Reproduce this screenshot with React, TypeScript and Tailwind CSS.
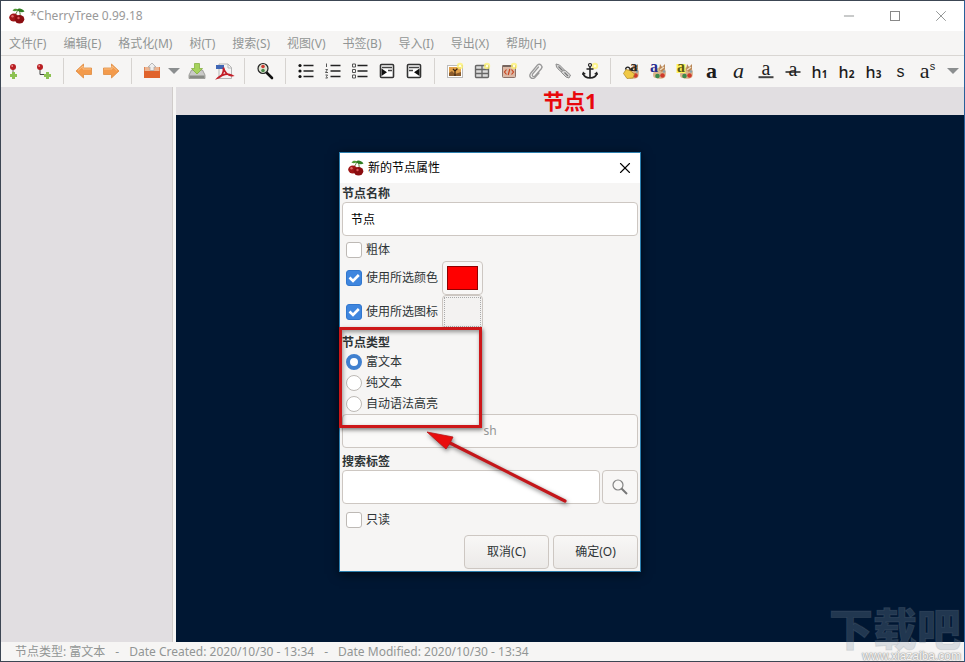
import { Minus, X } from 'lucide-react';
import { useState, type ReactNode } from 'react';

const MENUS = [
  '文件(F)',
  '编辑(E)',
  '格式化(M)',
  '树(T)',
  '搜索(S)',
  '视图(V)',
  '书签(B)',
  '导入(I)',
  '导出(X)',
  '帮助(H)',
];

const NODE_TYPES = ['富文本', '纯文本', '自动语法高亮'];

interface Tool {
  label: string;
  icon: ReactNode;
}

function Cherries() {
  return (
    <svg viewBox="0 0 16 16" className="size-4 shrink-0">
      <path d="M5 8C7 6 8 4 9 1.500M11 9C11.500 6 11 3 9 1.500" fill="none" stroke="#5b7d3a" strokeWidth="1" />
      <path d="M8 2C9 0 12.500 -.3 15.500 3.500C13 5 10 4 8 2Z" fill="#2f7d22" />
      <path d="M9 2C7.500 0 5 .3 3.500 2.500C5.500 3.800 8 3 9 2Z" fill="#4f9a35" />
      <ellipse cx="4.800" cy="9.500" rx="4.600" ry="4" fill="#a01616" />
      <ellipse cx="10.500" cy="11.300" rx="4.800" ry="4.200" fill="#8a0d10" />
      <circle cx="3.500" cy="8.300" r="1.200" fill="#e0696a" />
      <circle cx="9.500" cy="10" r="1.200" fill="#dc5558" />
    </svg>
  );
}

function Icon({ children }: { children: ReactNode }) {
  return (
    <svg viewBox="0 0 20 20" className="size-5 overflow-visible" fill="none">
      {children}
    </svg>
  );
}

function Spark({ x = 15, y = 5 }: { x?: number; y?: number }) {
  return (
    <>
      <circle cx={x} cy={y} r="3.200" fill="#fff36b" opacity=".75" />
      <circle cx={x} cy={y} r="1.300" fill="#fffde0" />
    </>
  );
}

function Palette() {
  return (
    <>
      <path d="M5 14C5 9 10 6 14 6C18 7 18.500 12 17.500 15C17 18 10 18.500 8 17C6 17 5 16 5 14Z" fill="#d9b48a" />
      <path d="M11 9L12 3L14 6L17 3L17 8L14 11Z" fill="#b98656" />
      <path d="M12 9L16 6" stroke="#f0dcc0" strokeWidth="1.500" />
      <circle cx="9.500" cy="15" r="2.300" fill="#3c8a4c" />
      <circle cx="14.500" cy="14.500" r="2.300" fill="#cf3a2c" />
      <circle cx="16" cy="10.500" r="1.300" fill="#8aa0a8" />
    </>
  );
}

// Glyph used by the text-format tools
function Letter({ className, children }: { className: string; children: ReactNode }) {
  return <span className={`leading-5 text-[#1c1c1c] ${className}`}>{children}</span>;
}

function Heading({ level }: { level: number }) {
  return (
    <Letter className="flex items-baseline pt-[2px] font-['Noto_Sans'] text-base font-medium">
      h<span className="text-[10px] font-bold leading-3">{level}</span>
    </Letter>
  );
}

const treeTools: Tool[] = [
  {
    label: '添加节点',
    icon: (
      <Icon>
        <path d="M7 6V14" stroke="#666" />
        <circle cx="7" cy="6" r="3" fill="#b81e22" />
        <circle cx="6.200" cy="5" r=".9" fill="#ee8f90" />
        <path d="M7.500 11V18M4 14.500H11" stroke="#8cc152" strokeWidth="3" />
      </Icon>
    ),
  },
  {
    label: '添加子节点',
    icon: (
      <Icon>
        <path d="M7 6V13.500H13" stroke="#444" />
        <circle cx="7" cy="6" r="3" fill="#b81e22" />
        <circle cx="6.200" cy="5" r=".9" fill="#ee8f90" />
        <path d="M14.500 11V18M11 14.500H18" stroke="#8cc152" strokeWidth="3" />
      </Icon>
    ),
  },
];

const historyTools: Tool[] = [
  {
    label: '后退',
    icon: (
      <Icon>
        <path d="M2 10L9.500 3V7H17.500V13.500H9.500V17Z" fill="#f39a4b" stroke="#e08a3e" strokeWidth=".8" strokeLinejoin="round" />
        <path d="M4 9.500L9 5V8H17" stroke="#f9bf86" />
      </Icon>
    ),
  },
  {
    label: '前进',
    icon: (
      <Icon>
        <path d="M18 10L10.500 3V7H2.500V13.500H10.500V17Z" fill="#f39a4b" stroke="#e08a3e" strokeWidth=".8" strokeLinejoin="round" />
        <path d="M16 9.500L11 5V8H3" stroke="#f9bf86" />
      </Icon>
    ),
  },
];

const openTool: Tool = {
  label: '打开',
  icon: (
    <Icon>
      <path d="M2 6H18V17H2Z" fill="#c9571f" />
      <path d="M2 10H18V17H2Z" fill="#e0632c" />
      <path d="M2.500 6H17.500V10H2.500Z" fill="#eeb48f" />
      <path d="M10 2L14 6H12V9.500H8V6H6Z" fill="#eee" stroke="#aaa" strokeWidth=".8" />
    </Icon>
  ),
};

const saveTools: Tool[] = [
  {
    label: '保存',
    icon: (
      <Icon>
        <path d="M4.500 9H15.500L18 14V17.500H2V14Z" fill="#c9c9c7" stroke="#8f8f8c" strokeWidth=".8" />
        <path d="M2.500 14.500H17.500V17H2.500Z" fill="#888a85" />
        <path d="M7.500 2.500H12.500V7.500H15.500L10 13L4.500 7.500H7.500Z" fill="#a6d35c" stroke="#7cab35" strokeWidth=".7" />
      </Icon>
    ),
  },
  {
    label: '导出 PDF',
    icon: (
      <Icon>
        <path d="M5 3H14L17.500 6.500V17.500H5Z" fill="#f4f4f4" stroke="#b5b5b5" />
        <path d="M14 3V7H17.500" stroke="#b5b5b5" />
        <path d="M2 4H10V8H2Z" fill="#3f66b5" />
        <path d="M4 17C8 16 10 11 9.500 6.500C10 11 14 15 18 14.500C14 12 8 13 4 17Z" stroke="#c3202a" strokeWidth="1.800" />
      </Icon>
    ),
  },
];

const findTool: Tool = {
  label: '查找',
  icon: (
    <Icon>
      <path d="M12 12L17 17" stroke="#111" strokeWidth="2.600" strokeLinecap="round" />
      <circle cx="8" cy="7.500" r="5" fill="#dfe4d5" stroke="#222" strokeWidth="1.200" />
      <circle cx="8" cy="5.500" r="1.800" fill="#cf3b32" />
      <circle cx="8" cy="9.500" r="1.800" fill="#4a8a4a" />
    </Icon>
  ),
};

const listTools: Tool[] = [
  {
    label: '项目列表',
    icon: (
      <Icon>
        <path d="M7.500 4.500H17.500M7.500 10H17.500M7.500 15.500H17.500" stroke="#222" strokeWidth="1.600" />
        <circle cx="4" cy="4.500" r="1.600" fill="#111" />
        <circle cx="4" cy="10" r="1.600" fill="#111" />
        <circle cx="4" cy="15.500" r="1.600" fill="#111" />
      </Icon>
    ),
  },
  {
    label: '编号列表',
    icon: (
      <Icon>
        <path d="M7.500 4.500H17.500M7.500 10H17.500M7.500 15.500H17.500" stroke="#222" strokeWidth="1.300" />
        <path d="M3.500 2.500V6M2.500 8.500H4.500L2.500 11.500H5M2.500 14H4.500L3.500 15.500L4.500 17H2.500" stroke="#444" strokeWidth=".9" />
      </Icon>
    ),
  },
  {
    label: '待办列表',
    icon: (
      <Icon>
        <path d="M7.500 4.500H17.500M7.500 10H17.500M7.500 15.500H17.500" stroke="#222" strokeWidth="1.500" />
        <path d="M2.500 3H5.500V6H2.500ZM2.500 8.500H5.500V11.500H2.500ZM2.500 14H5.500V17H2.500Z" stroke="#555" />
      </Icon>
    ),
  },
  {
    label: '增加缩进',
    icon: (
      <Icon>
        <rect x="3.500" y="3.500" width="13" height="13" rx="1" fill="#fff" stroke="#333" strokeWidth="1.600" />
        <path d="M5 6.500H15M11 9.500H15" stroke="#444" strokeWidth="1.300" />
        <path d="M4.500 7.500V15L10 11.200Z" fill="#111" />
      </Icon>
    ),
  },
  {
    label: '减少缩进',
    icon: (
      <Icon>
        <rect x="3.500" y="3.500" width="13" height="13" rx="1" fill="#fff" stroke="#333" strokeWidth="1.600" />
        <path d="M5 6.500H15M5 9.500H9" stroke="#444" strokeWidth="1.300" />
        <path d="M15.500 7.500V15L10 11.200Z" fill="#111" />
      </Icon>
    ),
  },
];

const insertTools: Tool[] = [
  {
    label: '插入图片',
    icon: (
      <Icon>
        <rect x="2.500" y="4.500" width="15" height="12" fill="#fff" stroke="#bbb" />
        <path d="M4 6H16V15H4Z" fill="#e0a04c" />
        <path d="M4 12L7 10L10 13L16 11V15H4Z" fill="#8a5b2c" />
        <path d="M10 15V9M8 8L10 10L12.500 7.500" stroke="#38240f" strokeWidth="1.200" />
        <Spark />
      </Icon>
    ),
  },
  {
    label: '插入表格',
    icon: (
      <Icon>
        <rect x="3.500" y="4.500" width="13" height="12" rx="1" fill="#dcdcdc" stroke="#666" strokeWidth="1.400" />
        <path d="M3.500 8.500H16.500M3.500 12.500H16.500M10 4.500V16.500" stroke="#666" strokeWidth="1.300" />
        <Spark />
      </Icon>
    ),
  },
  {
    label: '插入代码框',
    icon: (
      <Icon>
        <rect x="3.500" y="4.500" width="13" height="12" rx="1" fill="#dcb9a6" stroke="#8b7168" />
        <path d="M3.500 5H16.500" stroke="#76655e" strokeWidth="2" />
        <path d="M7.500 8.500L5.500 11L7.500 13.500M12.500 8.500L14.500 11L12.500 13.500M10.800 8L9.200 14" stroke="#c9451f" strokeWidth="1.200" />
        <Spark />
      </Icon>
    ),
  },
  {
    label: '插入附件',
    icon: (
      <Icon>
        <path d="M12.500 6L6.500 13C5.500 15 7.500 16.500 9 15L15.500 7.500C17 5 14 2 11.500 4L4.500 12.500C2.500 15.500 5.500 18.500 8.500 17L13 12" stroke="#999" strokeWidth="1.300" strokeLinecap="round" />
      </Icon>
    ),
  },
  {
    label: '插入链接',
    icon: (
      <Icon>
        <path d="M3 3L6.500 4L11 8.500L9.500 11.500L6.500 9.500L3.500 6Z" fill="#d4d4d4" stroke="#8b8b8b" strokeLinejoin="round" />
        <path d="M9.500 9L12.500 9.500L17.500 14L16 17L13 16L8.500 11.500Z" fill="#d4d4d4" stroke="#8b8b8b" strokeLinejoin="round" />
        <path d="M5.500 5.500L9 9M11.500 11.500L15 15" stroke="#777" strokeWidth="1.200" />
      </Icon>
    ),
  },
  {
    label: '插入锚点',
    icon: (
      <Icon>
        <Spark x={15} y={5} />
        <circle cx="10" cy="4" r="1.500" stroke="#222" strokeWidth="1.200" />
        <path d="M10 5.500V17M6.500 8H13.500M3 12C4 16 7 17 10 17C13 17 16 16 17 12" stroke="#222" strokeWidth="1.600" />
        <path d="M2 14L3 10.500L6 13ZM18 14L17 10.500L14 13Z" fill="#222" />
      </Icon>
    ),
  },
];

const formatTools: Tool[] = [
  {
    label: '最近格式',
    icon: (
      <Icon>
        <Palette />
        <text x="9" y="10" fontSize="15" fontWeight="700" fontFamily="Liberation Serif, serif" fill="#222">a</text>
        <path d="M2.500 12.500L5 8.500L9 9.500L13.500 13L12 17L6 17.500Z" fill="#f0c846" stroke="#a98422" strokeWidth=".7" />
        <path d="M4.500 8.500C5 5.500 8.500 5 9.500 9.500" stroke="#222" strokeWidth="1.300" />
      </Icon>
    ),
  },
  {
    label: '前景颜色',
    icon: (
      <Icon>
        <Palette />
        <text x="2" y="11" fontSize="16" fontWeight="700" fontFamily="Liberation Serif, serif" fill="#262b91">a</text>
      </Icon>
    ),
  },
  {
    label: '背景颜色',
    icon: (
      <Icon>
        <Palette />
        <path d="M1.500 3H10.500V12H1.500Z" fill="#fff35a" />
        <text x="2" y="11" fontSize="16" fontWeight="700" fontFamily="Liberation Serif, serif" fill="#5b5a18">a</text>
      </Icon>
    ),
  },
  { label: '粗体', icon: <Letter className="font-['Liberation_Serif'] text-[22px] font-bold">a</Letter> },
  { label: '斜体', icon: <Letter className="font-['Liberation_Serif'] text-[22px] italic">a</Letter> },
  {
    label: '下划线',
    icon: (
      <Icon>
        <text x="5.500" y="13.500" fontSize="20" fontFamily="Liberation Serif, serif" fill="#1c1c1c">a</text>
        <path d="M2.500 16.200H17.500" stroke="#444" strokeWidth="2" />
      </Icon>
    ),
  },
  {
    label: '删除线',
    icon: (
      <Icon>
        <text x="5.500" y="15" fontSize="20" fontFamily="Liberation Serif, serif" fill="#1c1c1c">a</text>
        <path d="M2.500 11H17.500" stroke="#222" strokeWidth="1.500" />
      </Icon>
    ),
  },
  { label: '标题 1', icon: <Heading level={1} /> },
  { label: '标题 2', icon: <Heading level={2} /> },
  { label: '标题 3', icon: <Heading level={3} /> },
  { label: '小号', icon: <Letter className="pt-[2px] font-['Liberation_Sans'] text-base">s</Letter> },
  {
    label: '上标',
    icon: (
      <Letter className="flex font-['Liberation_Serif'] text-[22px]">
        a<span className="font-['Liberation_Sans'] text-[11px] leading-[10px]">s</span>
      </Letter>
    ),
  },
];

function ToolButton({ label, icon }: Tool) {
  return (
    <button type="button" aria-label={label} className="flex h-[30px] w-[27px] shrink-0 items-center justify-center">
      {icon}
    </button>
  );
}

function ToolGroup({ tools }: { tools: Tool[] }) {
  return (
    <div className="flex">
      {tools.map((t) => (
        <ToolButton key={t.label} {...t} />
      ))}
    </div>
  );
}

function Separator() {
  return <div className="mx-[6px] h-[26px] w-[2px] shrink-0 border-r border-[#d6d3d0]" />;
}

function DropArrow({ label }: { label: string }) {
  return (
    <button type="button" aria-label={label} className="flex w-[18px] shrink-0 items-center justify-center">
      <svg viewBox="0 0 12 6" className="h-[6px] w-3">
        <path d="M0 0H12L6 6Z" fill="#8b8e8f" />
      </svg>
    </button>
  );
}

function Check({ label, defaultChecked = false }: { label: string; defaultChecked?: boolean }) {
  return (
    <label className="flex items-center gap-1">
      <span className="relative flex">
        <input
          type="checkbox"
          defaultChecked={defaultChecked}
          className="peer size-4 appearance-none rounded-[3px] border border-[#bdb9b5] bg-white checked:border-[#3177ce] checked:bg-[#3f86de]"
        />
        <svg viewBox="0 0 16 16" className="pointer-events-none absolute inset-0 hidden size-4 peer-checked:block">
          <path d="M3.500 7.500L7 11L12.800 5" fill="none" stroke="#fff" strokeWidth="2.600" />
        </svg>
      </span>
      {label}
    </label>
  );
}

function NodeDialog() {
  const [type, setType] = useState(NODE_TYPES[0]);
  const button = 'h-[34px] rounded-[4px] border border-[#cdc7c2]';

  return (
    <section
      role="dialog"
      aria-labelledby="dialog-title"
      className="absolute left-[338px] top-[151px] w-[302px] border border-[#2c7fae] bg-[#f6f5f4] text-xs text-[#2e3436] shadow-[0_2px_10px_rgba(0,0,0,0.6)]"
    >
      <header className="flex h-[30px] items-center gap-1 bg-white pl-2 pr-[6px]">
        <Cherries />
        <h2 id="dialog-title" className="flex-1 text-black">
          新的节点属性
        </h2>
        <button type="button" aria-label="关闭" className="text-black">
          <X className="size-[18px]" strokeWidth={1.5} />
        </button>
      </header>

      <form className="flex flex-col px-[2px] pb-[2px]" onSubmit={(e) => e.preventDefault()}>
        <label htmlFor="node-name" className="h-[19px] pt-px font-bold leading-5">
          节点名称
        </label>
        <input
          id="node-name"
          defaultValue="节点"
          className="h-[34px] rounded-[4px] border border-[#cdc7c2] bg-white px-2 text-black outline-none"
        />
        <div className="flex h-[25px] items-center pl-1 pt-[2px]">
          <Check label="粗体" />
        </div>
        <div className="flex h-[34px] items-center gap-1 pl-1">
          <Check label="使用所选颜色" defaultChecked />
          <button type="button" aria-label="选择颜色" className={`${button} w-[41px] bg-[#f8f7f6] p-1`}>
            <span className="block h-full border border-[#8f0000] bg-[#f00]" />
          </button>
        </div>
        <div className="flex h-[34px] items-center gap-1 pl-1">
          <Check label="使用所选图标" defaultChecked />
          <button type="button" aria-label="选择图标" className={`${button} w-[41px] bg-[#f3f2f1] p-px`}>
            <span className="block h-full border border-dotted border-[#aaa]" />
          </button>
        </div>

        <fieldset>
          <legend className="h-[22px] pt-1 font-bold leading-5">节点类型</legend>
          {NODE_TYPES.map((t) => (
            <label key={t} className="flex h-[21px] items-center gap-1 pl-1">
              <input
                type="radio"
                name="node-type"
                checked={type === t}
                onChange={() => setType(t)}
                className="size-4 appearance-none rounded-full border border-[#bdb9b5] bg-white checked:border-4 checked:border-[#4080cf]"
              />
              {t}
            </label>
          ))}
        </fieldset>
        <button type="button" disabled className={`${button} bg-[#faf9f8] text-[#929595]`}>
          sh
        </button>

        <label htmlFor="node-tags" className="h-[22px] pt-1 font-bold leading-5">
          搜索标签
        </label>
        <div className="flex gap-[2px]">
          <input
            id="node-tags"
            className="h-[34px] min-w-0 flex-1 rounded-[4px] border border-[#cdc7c2] bg-white px-2 outline-none"
          />
          <button
            type="button"
            aria-label="搜索标签"
            className={`${button} flex w-9 items-center justify-center bg-[#f8f7f6]`}
          >
            <svg viewBox="0 0 16 16" className="size-4" fill="none">
              <circle cx="6" cy="6" r="5" stroke="#858585" strokeWidth="1.200" />
              <path d="M9.500 9.500L15 15" stroke="#777" strokeWidth="2" />
            </svg>
          </button>
        </div>
        <div className="flex h-[31px] items-center pl-1">
          <Check label="只读" />
        </div>
        <div className="flex justify-end gap-1">
          <button type="button" className={`${button} w-[85px] bg-linear-to-b from-[#f8f7f6] to-[#eceae8]`}>
            取消(C)
          </button>
          <button type="submit" className={`${button} w-[85px] bg-linear-to-b from-[#f8f7f6] to-[#eceae8]`}>
            确定(O)
          </button>
        </div>
      </form>
    </section>
  );
}

// Red frame and arrow pointing at the node type choices
function Callout() {
  return (
    <>
      <div className="pointer-events-none absolute left-[338px] top-[326px] h-[101px] w-[143px] border-3 border-[#cd1719] shadow-[1px_2px_4px_rgba(0,0,0,0.5),inset_1px_2px_4px_rgba(0,0,0,0.4)]" />
      <svg
        viewBox="0 0 146 78"
        className="pointer-events-none absolute left-[423px] top-[427px] h-[78px] w-[146px] drop-shadow-[1px_2px_2px_rgba(0,0,0,0.5)]"
      >
        <path d="M24 14L141 73" stroke="#c4161a" strokeWidth="3.200" strokeLinecap="round" />
        <path d="M3 4L29 9L26 15L22 21Z" fill="#e80d0d" stroke="#b51417" strokeWidth=".8" />
      </svg>
    </>
  );
}

function Watermark() {
  return (
    <div
      aria-hidden
      className="pointer-events-none absolute bottom-0 right-0 flex flex-col items-end pr-[3px]"
    >
      <span className="text-[44px] font-black leading-[44px] text-[#8497a9]/25 [-webkit-text-stroke:1px_rgba(130,140,150,0.2)]">
        下载吧
      </span>
      <span className="font-['Liberation_Sans'] text-xs leading-[10px] text-[#f6f5f4] [text-shadow:0_0_1px_#999,0_0_1px_#999,0_0_2px_#aaa]">
        www.xiazaiba.com
      </span>
    </div>
  );
}

export default function App() {
  return (
    <div className="relative flex h-screen min-h-[600px] flex-col overflow-hidden border border-[#3c4653] border-r-[#28609a] bg-[#f6f5f4] font-['Noto_Sans','Noto_Sans_CJK_SC',sans-serif] text-xs text-[#929595]">
      <header className="flex h-[30px] shrink-0 items-center bg-white pl-2">
        <Cherries />
        <h1 className="flex-1 pl-[5px] text-[#999]">*CherryTree 0.99.18</h1>
        <button type="button" aria-label="最小化" className="flex w-[46px] justify-center">
          <Minus className="size-4" strokeWidth={1.5} />
        </button>
        <button type="button" aria-label="最大化" className="flex w-[46px] justify-center">
          <span className="size-[10px] border border-[#888]" />
        </button>
        <button type="button" aria-label="关闭" className="flex w-[46px] justify-center">
          <X className="size-[18px]" strokeWidth={1.3} />
        </button>
      </header>

      <nav className="flex h-[25px] shrink-0 items-center gap-[17px] border-b border-[#d9d6d3] pl-2 pt-[2px]">
        {MENUS.map((m) => (
          <button key={m} type="button" className="whitespace-nowrap">
            {m}
          </button>
        ))}
      </nav>

      <div role="toolbar" className="flex h-[31px] shrink-0 items-start overflow-hidden pl-px">
        <div className="flex h-[30px] flex-1 items-center">
          <ToolGroup tools={treeTools} />
          <Separator />
          <ToolGroup tools={historyTools} />
          <Separator />
          <ToolButton {...openTool} />
          <DropArrow label="最近文档" />
          <ToolGroup tools={saveTools} />
          <Separator />
          <ToolButton {...findTool} />
          <Separator />
          <ToolGroup tools={listTools} />
          <Separator />
          <ToolGroup tools={insertTools} />
          <Separator />
          <ToolGroup tools={formatTools} />
          <div className="ml-auto flex pr-[2px]">
            <DropArrow label="更多工具" />
          </div>
        </div>
      </div>

      <main className="flex min-h-0 flex-1">
        <aside className="w-[172px] shrink-0 border-r border-[#d0ccca] bg-[#e1dee1]" />
        <div className="flex flex-1 flex-col pl-[3px]">
          <h2 className="h-7 bg-[#e1dee1] text-center text-[21px] font-bold leading-7 text-[#e8080c]">节点1</h2>
          <div className="flex-1 bg-[#001733]" />
        </div>
      </main>

      <footer className="flex h-[19px] shrink-0 items-center gap-[10px] pl-[14px]">
        <span>节点类型: 富文本</span>
        <span>-</span>
        <span>Date Created: 2020/10/30 - 13:34</span>
        <span>-</span>
        <span>Date Modified: 2020/10/30 - 13:34</span>
      </footer>

      <NodeDialog />
      <Callout />
      <Watermark />
    </div>
  );
}
